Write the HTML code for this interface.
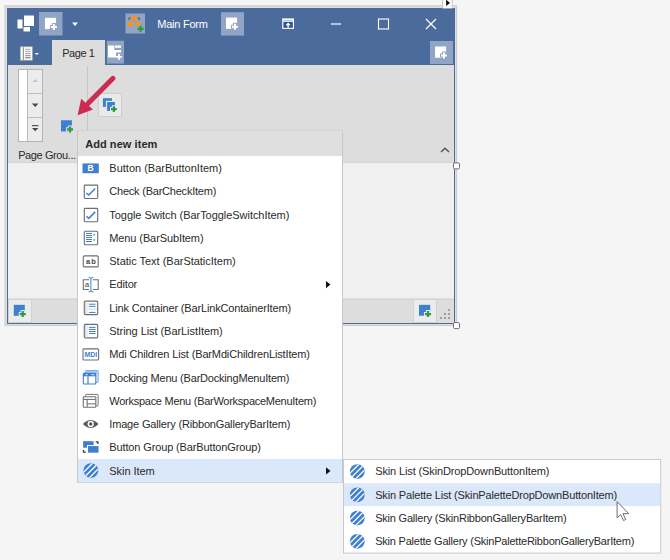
<!DOCTYPE html>
<html>
<head>
<meta charset="utf-8">
<title>Add new item</title>
<style>
*{box-sizing:border-box;margin:0;padding:0}
html,body{width:670px;height:560px;overflow:hidden;background:#f5f5f5}
body{position:relative;font-family:"Liberation Sans",sans-serif;font-size:11px;color:#2a2a2a}
svg{position:absolute;left:0;top:0}
.t{position:absolute;white-space:nowrap;line-height:12px;height:12px;font-size:11px}
</style>
</head>
<body>
<svg width="670" height="560" viewBox="0 0 670 560">
<rect x="4.6" y="5.4" width="452.5" height="320.5" fill="#c6c6c6"/>
<rect x="5.5" y="6.3" width="450.8" height="318.8" fill="#dedede"/>
<rect x="7" y="8" width="448" height="316" fill="#4b6b9d"/>
<rect x="8" y="65" width="446" height="97.5" fill="#dddddd"/>
<rect x="8" y="161.6" width="446" height="0.9" fill="#d6d6d6"/>
<rect x="8" y="162.5" width="446" height="136.5" fill="#f0f0f0"/>
<rect x="8" y="299" width="446" height="24" fill="#dddddd"/>
<rect x="8" y="298.5" width="446" height="1" fill="#cdcdcd"/>
<rect x="442.3" y="-1" width="10.3" height="9.4" fill="#fff"/>
<rect x="442.2" y="0" width="1" height="7.8" fill="#c0c0c0"/>
<rect x="451.7" y="0" width="1" height="7.8" fill="#c0c0c0"/>
<path d="M446.1,-0.4 L450,2.9 L446.1,6.1 Z" fill="#0a0a0a"/>
<rect x="24" y="15.5" width="10" height="10.5" fill="#fff"/>
<rect x="17.5" y="19.5" width="5" height="9" fill="#fff"/>
<rect x="23.5" y="27" width="6.5" height="4.5" fill="#fff"/>
<rect x="39" y="12" width="23.5" height="23.5" fill="#90a4c5"/>
<rect x="44.95" y="17.8" width="11.1" height="11.25" fill="#fff"/>
<path d="M49.900000000000006,26.9H57.900000000000006M53.900000000000006,22.9V30.9" stroke="#90a4c5" stroke-width="4.0" stroke-linecap="butt" fill="none"/><path d="M50.900000000000006,26.9H56.900000000000006M53.900000000000006,23.9V29.9" stroke="#fff" stroke-width="2.0" fill="none"/>
<path d="M72,22.6 H78 L75,26 Z" fill="#fff"/>
<rect x="125.5" y="13.5" width="19.5" height="20" fill="#90a4c5"/>
<path d="M128.7,20 Q128.9,18.2 130.3,17.3" stroke="#6a6a6a" stroke-width="1.5" fill="none"/>
<path d="M138,17.3 Q139.4,18.2 139.6,20" stroke="#6a6a6a" stroke-width="1.5" fill="none"/>
<rect x="131.5" y="15.8" width="5" height="4.8" fill="#f7941d"/>
<rect x="127.5" y="21.7" width="5" height="5" fill="#f7941d"/>
<rect x="135.6" y="21.7" width="5" height="5" fill="#f7941d"/>
<rect x="137.5" y="25" width="5" height="4" fill="#90a4c5"/>
<path d="M137.5,28.9H143.7M140.6,25.799999999999997V32.0" stroke="#2d9a44" stroke-width="2.1" fill="none"/>
<rect x="221" y="12.2" width="23" height="23.4" fill="#90a4c5"/>
<rect x="226" y="17.6" width="11.1" height="11.25" fill="#fff"/>
<path d="M230.95,26.700000000000003H238.95M234.95,22.700000000000003V30.700000000000003" stroke="#90a4c5" stroke-width="4.0" stroke-linecap="butt" fill="none"/><path d="M231.95,26.700000000000003H237.95M234.95,23.700000000000003V29.700000000000003" stroke="#fff" stroke-width="2.0" fill="none"/>
<rect x="282.2" y="18.4" width="11.8" height="10.5" fill="#fff"/>
<rect x="283.4" y="21.8" width="9.4" height="6" fill="#30538a"/>
<rect x="283.6" y="19.9" width="9" height="0.7" fill="#8ea2c4"/>
<path d="M288.1,22.5 L290.7,25.2 H288.8 V27.8 H287.4 V25.2 H285.5 Z" fill="#fff"/>
<rect x="331" y="23.4" width="10" height="1.2" fill="#fff"/>
<rect x="378.5" y="19" width="10" height="10" fill="none" stroke="#fff" stroke-width="1.1"/>
<path d="M426,19 L436,29 M436,19 L426,29" stroke="#fff" stroke-width="1.2" fill="none"/>
<rect x="20.3" y="46.8" width="12" height="13.4" fill="#fff" stroke="#b3ab9c" stroke-width="0.7"/>
<rect x="22.8" y="47.2" width="1.1" height="12.6" fill="#8c8c8c"/>
<rect x="25.1" y="48.7" width="5.5" height="1.25" fill="#bcbcbc"/>
<rect x="25.1" y="50.8" width="5.5" height="1.25" fill="#b4b4b4"/>
<rect x="25.1" y="52.9" width="5.5" height="1.25" fill="#aaaaaa"/>
<rect x="25.1" y="55.0" width="5.5" height="1.25" fill="#9e9e9e"/>
<rect x="25.1" y="57.1" width="5.5" height="1.25" fill="#808080"/>
<path d="M34.7,52.9 H39 L36.85,55.1 Z" fill="#fff"/>
<rect x="52" y="40" width="53" height="25" fill="#dddddd"/>
<rect x="106.8" y="40.8" width="17.2" height="22.8" fill="#90a4c5"/>
<path d="M108,45.4 H114.4 V49.9 H121 V52.5 H116 V57.5 H108 Z" fill="#fff"/>
<rect x="115.1" y="45.5" width="5.9" height="2.3" fill="#fff"/>
<path d="M116.1,56.9H121.9M119,54.0V59.8" stroke="#fff" stroke-width="1.9" fill="none"/>
<rect x="430" y="41" width="23" height="23" fill="#90a4c5"/>
<rect x="435" y="46.5" width="11.1" height="11.25" fill="#fff"/>
<path d="M439.95,55.6H447.95M443.95,51.6V59.6" stroke="#90a4c5" stroke-width="4.0" stroke-linecap="butt" fill="none"/><path d="M440.95,55.6H446.95M443.95,52.6V58.6" stroke="#fff" stroke-width="2.0" fill="none"/>
<rect x="18.5" y="69.5" width="24" height="72" fill="#ececec" stroke="#b4b4b4" stroke-width="1"/>
<rect x="19" y="70" width="8" height="71" fill="#fff"/>
<rect x="27" y="70" width="1" height="71" fill="#b9b9b9"/>
<rect x="28" y="93" width="14" height="1" fill="#bdbdbd"/>
<rect x="28" y="117" width="14" height="1" fill="#bdbdbd"/>
<path d="M32.7,82 H37.7 L35.2,79 Z" fill="#c4c4c4"/>
<path d="M31.9,103.4 H38.5 L35.2,106.9 Z" fill="#484848"/>
<rect x="31.9" y="125" width="6.6" height="1.2" fill="#555"/>
<path d="M31.9,127.9 H38.5 L35.2,131.3 Z" fill="#484848"/>
<rect x="87" y="66" width="1" height="90" fill="#c6c6c6"/>
<rect x="61" y="120.25" width="10.9" height="11.2" fill="#3f7fcf"/>
<path d="M65.95,129.45H74.05M70,125.39999999999999V133.5" stroke="#dddddd" stroke-width="4.25" stroke-linecap="butt" fill="none"/><path d="M66.95,129.45H73.05M70,126.39999999999999V132.5" stroke="#2d9a44" stroke-width="2.25" fill="none"/>
<rect x="98.5" y="93.5" width="23" height="23" fill="#e9e9e9" stroke="#cdcdcd" stroke-width="1"/>
<rect x="102.9" y="98.2" width="9.1" height="8.7" fill="#3f7fcf"/>
<rect x="105.9" y="100.8" width="10" height="11" fill="#e9e9e9"/>
<rect x="107.1" y="102" width="7.8" height="8.9" fill="#3f7fcf"/>
<path d="M110.0,109.15H117.80000000000001M113.9,105.25V113.05000000000001" stroke="#e9e9e9" stroke-width="4.2" stroke-linecap="butt" fill="none"/><path d="M111.0,109.15H116.80000000000001M113.9,106.25V112.05000000000001" stroke="#2d9a44" stroke-width="2.2" fill="none"/>
<path d="M113,78.3 L88,103.5" stroke="#cb2c53" stroke-width="5" stroke-linecap="round" fill="none"/>
<path d="M77.6,115.3 L81.2,98.8 L93,109.6 Z" fill="#cb2c53"/>
<path d="M441,152 L445,148.2 L449,152" stroke="#555" stroke-width="1.5" fill="none"/>
<rect x="8.5" y="299.5" width="23" height="23" fill="#ececec" stroke="#d2d2d2" stroke-width="1"/>
<rect x="13.8" y="304.85" width="11" height="11" fill="#3f7fcf"/>
<path d="M18.65,314.05H26.75M22.7,310.0V318.1" stroke="#ececec" stroke-width="4.25" stroke-linecap="butt" fill="none"/><path d="M19.65,314.05H25.75M22.7,311.0V317.1" stroke="#2d9a44" stroke-width="2.25" fill="none"/>
<rect x="413.5" y="299.5" width="23" height="23" fill="#ececec" stroke="#d2d2d2" stroke-width="1"/>
<rect x="419" y="304.85" width="11.2" height="10.9" fill="#3f7fcf"/>
<path d="M423.95,314.05H432.05M428,310.0V318.1" stroke="#ececec" stroke-width="4.25" stroke-linecap="butt" fill="none"/><path d="M424.95,314.05H431.05M428,311.0V317.1" stroke="#2d9a44" stroke-width="2.25" fill="none"/>
<rect x="440" y="317" width="2" height="2" fill="#a0a0a0"/>
<rect x="444" y="317" width="2" height="2" fill="#a0a0a0"/>
<rect x="448" y="317" width="2" height="2" fill="#a0a0a0"/>
<rect x="444" y="313" width="2" height="2" fill="#a0a0a0"/>
<rect x="448" y="313" width="2" height="2" fill="#a0a0a0"/>
<rect x="448" y="309" width="2" height="2" fill="#a0a0a0"/>
<rect x="453.5" y="162.9" width="6" height="6" rx="1.2" fill="#fff" stroke="#707070" stroke-width="1"/>
<rect x="453.5" y="322.6" width="6" height="6" rx="1.2" fill="#fff" stroke="#707070" stroke-width="1"/>
<rect x="77.5" y="131.0" width="265" height="351.2" fill="#fff" stroke="#c8c8c8" stroke-width="1"/>
<rect x="78" y="131.5" width="264" height="24.4" fill="#dfdfdf"/>
<rect x="78" y="459" width="264" height="23" fill="#dbe7fb"/>
<rect x="343.5" y="459.5" width="317.2" height="93.6" fill="#fff" stroke="#c8c8c8" stroke-width="1"/>
<rect x="344" y="483.2" width="316.2" height="22.9" fill="#dbe7fb"/>
<path d="M326,281 V288.2 L330.4,284.6 Z" fill="#111"/>
<path d="M326,467.2 V474.6 L330.5,470.9 Z" fill="#111"/>
<rect x="82.5" y="163.44" width="16.3" height="9.8" fill="#3f7fcf"/>
<text x="90.6" y="171.34" font-size="8.5" font-weight="bold" fill="#fff" text-anchor="middle" font-family="Liberation Sans">B</text>
<rect x="84.3" y="185.08" width="13.4" height="13.4" rx="0.9" fill="#fff" stroke="#6e6e76" stroke-width="1.15"/>
<path d="M86.4,192.98 L88.8,195.08 L95.2,188.58" stroke="#3f7fcf" stroke-width="1.5" fill="none"/>
<rect x="84.3" y="208.37" width="13.4" height="13.4" rx="0.9" fill="#fff" stroke="#6e6e76" stroke-width="1.15"/>
<path d="M86.4,216.26 L88.8,218.37 L95.2,211.87" stroke="#3f7fcf" stroke-width="1.5" fill="none"/>
<rect x="84.3" y="231.30" width="13.4" height="13.4" rx="1" fill="#fff" stroke="#6e6e76" stroke-width="1.1"/>
<rect x="86" y="233.00" width="6" height="1" fill="#3f7fcf"/>
<rect x="86" y="235.00" width="6" height="1" fill="#3f7fcf"/>
<rect x="86" y="237.00" width="6" height="1" fill="#3f7fcf"/>
<rect x="86" y="239.00" width="6" height="1" fill="#3f7fcf"/>
<rect x="86" y="241.00" width="6" height="1" fill="#3f7fcf"/>
<path d="M93.6,233.40 v2.8 l1.7,-1.4 Z" fill="#3f7fcf"/>
<path d="M93.6,238.50 v2.8 l1.7,-1.4 Z" fill="#3f7fcf"/>
<rect x="83.3" y="255.89" width="14.9" height="11.0" rx="1" fill="#fff" stroke="#6e6e76" stroke-width="1.1"/>
<text x="85.9" y="264.39" font-size="7.5" font-weight="bold" fill="#444" letter-spacing="1.3" font-family="Liberation Sans">ab</text>
<path d="M89.1,279.77 H83.3 V289.57 H89.1 M92.8,279.77 H98.2 V289.57 H92.8" fill="none" stroke="#6e6e76" stroke-width="1.1"/>
<text x="84.7" y="286.77" font-size="7.9" fill="#333" font-family="Liberation Sans">a</text>
<path d="M90.9,278.57 V290.77 M88.6,277.37 Q90.6,277.57 90.9,278.97 Q91.2,277.57 93.4,277.37 M88.6,291.87 Q90.6,291.67 90.9,290.27 Q91.2,291.67 93.4,291.87" fill="none" stroke="#4f93d8" stroke-width="1.1"/>
<rect x="84.3" y="301.16" width="13.4" height="13.4" rx="1" fill="#fff" stroke="#6e6e76" stroke-width="1.15"/>
<rect x="84.9" y="301.76" width="1.6" height="12.2" fill="#d9d9d9"/>
<rect x="86.5" y="301.76" width="1.3" height="12.2" fill="#ebebeb"/>
<rect x="88" y="308.61" width="9" height="1" fill="#d4d4d4"/>
<rect x="88.9" y="303.71" width="6.7" height="1" fill="#3f7fcf"/>
<rect x="88.9" y="305.91" width="6.7" height="1" fill="#3f7fcf"/>
<rect x="88.9" y="311.91" width="6.7" height="1" fill="#3f7fcf"/>
<rect x="84.3" y="324.44" width="13.4" height="13.4" rx="1" fill="#fff" stroke="#6e6e76" stroke-width="1.15"/>
<rect x="84.9" y="325.04" width="1.6" height="12.2" fill="#d9d9d9"/>
<rect x="86.5" y="325.04" width="1.3" height="12.2" fill="#ebebeb"/>
<rect x="88.9" y="326.89" width="6.7" height="1" fill="#3f7fcf"/>
<rect x="88.9" y="328.94" width="6.7" height="1" fill="#3f7fcf"/>
<rect x="88.9" y="331.00" width="6.7" height="1" fill="#3f7fcf"/>
<rect x="88.9" y="333.04" width="6.7" height="1" fill="#3f7fcf"/>
<rect x="83" y="348.83" width="15.6" height="11.2" rx="1" fill="#fff" stroke="#6e6e76" stroke-width="1.1"/>
<text x="90.8" y="357.13" font-size="7.8" font-weight="bold" fill="#3f7fcf" text-anchor="middle" font-family="Liberation Sans" textLength="12.8" lengthAdjust="spacingAndGlyphs">MDI</text>
<rect x="85.4" y="370.62" width="12.7" height="11.8" rx="0.8" fill="#edf3fc" stroke="#5a96dc" stroke-width="0.9"/>
<rect x="85.9" y="371.12" width="11.7" height="3" fill="#a9c8ee"/>
<rect x="83.3" y="373.42" width="12.5" height="10.6" rx="0.8" fill="#fff" stroke="#3f7fcf" stroke-width="1.1"/>
<rect x="83.3" y="373.12" width="12.5" height="3.2" fill="#3f7fcf"/>
<path d="M85.4,374.72 h2.4 M91.3,374.72 h3" stroke="#eaf2fc" stroke-width="0.9"/>
<rect x="87.4" y="376.32" width="1.2" height="7.4" fill="#3f7fcf"/>
<rect x="85.4" y="394.40" width="12.7" height="11.6" rx="0.8" fill="#fff" stroke="#6e6e76" stroke-width="0.95"/>
<rect x="83.3" y="396.70" width="12.5" height="10.5" rx="0.8" fill="#fff" stroke="#6e6e76" stroke-width="1.1"/>
<rect x="83.5" y="398.90" width="12" height="1.05" fill="#6e6e76"/>
<rect x="86.6" y="399.50" width="1.1" height="7.4" fill="#6e6e76"/>
<rect x="87.2" y="403.30" width="8.4" height="1.05" fill="#6e6e76"/>
<path d="M82.9,423.99 Q90.7,415.79 98.5,423.99 Q90.7,432.19 82.9,423.99 Z" fill="#585858"/>
<circle cx="90.7" cy="423.99" r="3.15" fill="#fff"/>
<circle cx="90.7" cy="423.99" r="1.75" fill="#585858"/>
<rect x="83.1" y="441.18" width="10.5" height="6.5" fill="#3f7fcf"/>
<rect x="87" y="445.08" width="12.5" height="8.6" fill="#fff"/>
<rect x="88" y="446.08" width="10.5" height="6.6" fill="#3f7fcf"/>
<path d="M95.7,441.78 H97.9 V444.08" stroke="#3a3a3a" stroke-width="1.3" fill="none"/>
<path d="M83.5,449.98 V452.08 H85.8" stroke="#3a3a3a" stroke-width="1.3" fill="none"/>
<clipPath id="c0"><circle cx="90.9" cy="470.6" r="7.4"/></clipPath><circle cx="90.9" cy="470.6" r="7.4" fill="#3f7fcf"/><g clip-path="url(#c0)" stroke="#fff" stroke-width="1.3"><path d="M78.05000000000001,477.75L98.05000000000001,457.75"/><path d="M80.9,480.6L100.9,460.6"/><path d="M83.75,483.45000000000005L103.75,463.45000000000005"/></g>
<clipPath id="s0"><circle cx="357.3" cy="471.6" r="7.4"/></clipPath><circle cx="357.3" cy="471.6" r="7.4" fill="#3f7fcf"/><g clip-path="url(#s0)" stroke="#fff" stroke-width="1.3"><path d="M344.45,478.75L364.45,458.75"/><path d="M347.3,481.6L367.3,461.6"/><path d="M350.15000000000003,484.45000000000005L370.15000000000003,464.45000000000005"/></g>
<clipPath id="s1"><circle cx="357.3" cy="494.85" r="7.4"/></clipPath><circle cx="357.3" cy="494.85" r="7.4" fill="#3f7fcf"/><g clip-path="url(#s1)" stroke="#fff" stroke-width="1.3"><path d="M344.45,502.0L364.45,482.0"/><path d="M347.3,504.85L367.3,484.85"/><path d="M350.15000000000003,507.70000000000005L370.15000000000003,487.70000000000005"/></g>
<clipPath id="s2"><circle cx="357.3" cy="518.1" r="7.4"/></clipPath><circle cx="357.3" cy="518.1" r="7.4" fill="#3f7fcf"/><g clip-path="url(#s2)" stroke="#fff" stroke-width="1.3"><path d="M344.45,525.25L364.45,505.25"/><path d="M347.3,528.1L367.3,508.1"/><path d="M350.15000000000003,530.95L370.15000000000003,510.95000000000005"/></g>
<clipPath id="s3"><circle cx="357.3" cy="541.35" r="7.4"/></clipPath><circle cx="357.3" cy="541.35" r="7.4" fill="#3f7fcf"/><g clip-path="url(#s3)" stroke="#fff" stroke-width="1.3"><path d="M344.45,548.5L364.45,528.5"/><path d="M347.3,551.35L367.3,531.35"/><path d="M350.15000000000003,554.2L370.15000000000003,534.2"/></g>
<path d="M617.1,501.6 L617.1,517.9 L620.6,514.6 L623.6,520.6 L625.7,519.3 L623,513.7 L628.7,513.6 Z" fill="#fff" stroke="#5c5c5c" stroke-width="0.9" stroke-linejoin="miter"/>
</svg>
<div class="t" id="tMain" style="left:157.2px;top:17.90px;letter-spacing:-0.2222px;color:#fff">Main Form</div>
<div class="t" id="tPage" style="left:62.2px;top:46.80px;letter-spacing:-0.4354px;">Page 1</div>
<div class="t" id="tGrp" style="left:18.2px;top:148.60px;letter-spacing:-0.4010px;">Page Grou...</div>
<div class="t" id="tHdr" style="left:85.2px;top:137.80px;letter-spacing:0.0622px;font-weight:bold">Add new item</div>
<div class="t" id="m0" style="left:109.3px;top:162.04px;letter-spacing:0.0070px;">Button (BarButtonItem)</div>
<div class="t" id="m1" style="left:109.3px;top:185.33px;letter-spacing:-0.2206px;">Check (BarCheckItem)</div>
<div class="t" id="m2" style="left:109.3px;top:208.62px;letter-spacing:-0.0464px;">Toggle Switch (BarToggleSwitchItem)</div>
<div class="t" id="m3" style="left:109.3px;top:231.90px;letter-spacing:-0.1077px;">Menu (BarSubItem)</div>
<div class="t" id="m4" style="left:109.3px;top:255.19px;letter-spacing:-0.0185px;">Static Text (BarStaticItem)</div>
<div class="t" id="m5" style="left:109.3px;top:278.47px;letter-spacing:-0.1495px;">Editor</div>
<div class="t" id="m6" style="left:109.3px;top:301.76px;letter-spacing:-0.1635px;">Link Container (BarLinkContainerItem)</div>
<div class="t" id="m7" style="left:109.3px;top:325.04px;letter-spacing:-0.0628px;">String List (BarListItem)</div>
<div class="t" id="m8" style="left:109.3px;top:348.33px;letter-spacing:-0.1446px;">Mdi Children List (BarMdiChildrenListItem)</div>
<div class="t" id="m9" style="left:109.3px;top:371.62px;letter-spacing:-0.1974px;">Docking Menu (BarDockingMenuItem)</div>
<div class="t" id="m10" style="left:109.3px;top:394.90px;letter-spacing:-0.2668px;">Workspace Menu (BarWorkspaceMenuItem)</div>
<div class="t" id="m11" style="left:109.3px;top:418.19px;letter-spacing:-0.1701px;">Image Gallery (RibbonGalleryBarItem)</div>
<div class="t" id="m12" style="left:109.3px;top:441.48px;letter-spacing:-0.1331px;">Button Group (BarButtonGroup)</div>
<div class="t" id="m13" style="left:109.3px;top:464.76px;letter-spacing:-0.0563px;">Skin Item</div>
<div class="t" id="s0" style="left:375.2px;top:465.30px;letter-spacing:-0.1280px;">Skin List (SkinDropDownButtonItem)</div>
<div class="t" id="s1" style="left:375.2px;top:488.55px;letter-spacing:-0.1673px;">Skin Palette List (SkinPaletteDropDownButtonItem)</div>
<div class="t" id="s2" style="left:375.2px;top:511.80px;letter-spacing:-0.2060px;">Skin Gallery (SkinRibbonGalleryBarItem)</div>
<div class="t" id="s3" style="left:375.2px;top:535.05px;letter-spacing:-0.2200px;">Skin Palette Gallery (SkinPaletteRibbonGalleryBarItem)</div>
</body>
</html>
